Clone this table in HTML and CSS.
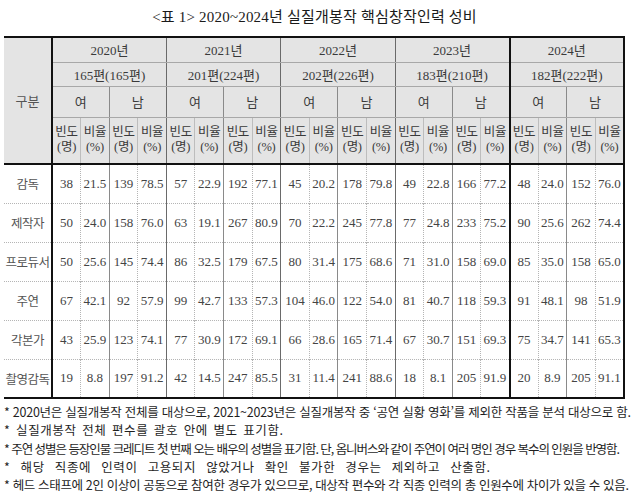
FILE: index.html
```html
<!DOCTYPE html>
<html lang="ko">
<head>
<meta charset="utf-8">
<title>표 1</title>
<link rel="stylesheet" href="styles.css">
</head>
<body>
<div class="page">
  <h1 class="title">&lt;표 1&gt; 2020~2024년 실질개봉작 핵심창작인력 성비</h1>
  <table class="stats">
    <colgroup>
      <col class="c-label">
      <col><col><col><col><col><col><col><col><col><col>
      <col><col><col><col><col><col><col><col><col><col>
    </colgroup>
    <thead>
      <tr class="r-year">
        <th rowspan="4" class="label">구분</th>
        <th colspan="4" class="ys">2020년</th>
        <th colspan="4" class="ys">2021년</th>
        <th colspan="4" class="ys">2022년</th>
        <th colspan="4" class="ys">2023년</th>
        <th colspan="4" class="ys last">2024년</th>
      </tr>
      <tr class="r-count">
        <th colspan="4" class="ys">165편(165편)</th>
        <th colspan="4" class="ys">201편(224편)</th>
        <th colspan="4" class="ys">202편(226편)</th>
        <th colspan="4" class="ys">183편(210편)</th>
        <th colspan="4" class="ys last">182편(222편)</th>
      </tr>
      <tr class="r-sex">
        <th colspan="2" class="ys">여</th><th colspan="2" class="gs">남</th>
        <th colspan="2" class="ys">여</th><th colspan="2" class="gs">남</th>
        <th colspan="2" class="ys">여</th><th colspan="2" class="gs">남</th>
        <th colspan="2" class="ys">여</th><th colspan="2" class="gs">남</th>
        <th colspan="2" class="ys last">여</th><th colspan="2" class="gs">남</th>
      </tr>
      <tr class="r-unit">
        <th class="ys">빈도<br>(명)</th><th class="ss">비율<br>(%)</th><th class="gs">빈도<br>(명)</th><th class="ss">비율<br>(%)</th>
        <th class="ys">빈도<br>(명)</th><th class="ss">비율<br>(%)</th><th class="gs">빈도<br>(명)</th><th class="ss">비율<br>(%)</th>
        <th class="ys">빈도<br>(명)</th><th class="ss">비율<br>(%)</th><th class="gs">빈도<br>(명)</th><th class="ss">비율<br>(%)</th>
        <th class="ys">빈도<br>(명)</th><th class="ss">비율<br>(%)</th><th class="gs">빈도<br>(명)</th><th class="ss">비율<br>(%)</th>
        <th class="ys last">빈도<br>(명)</th><th class="ss">비율<br>(%)</th><th class="gs">빈도<br>(명)</th><th class="ss">비율<br>(%)</th>
      </tr>
    </thead>
    <tbody class="data">
      <tr>
        <th class="row-label">감독</th>
        <td>38</td><td>21.5</td><td>139</td><td>78.5</td>
        <td>57</td><td>22.9</td><td>192</td><td>77.1</td>
        <td>45</td><td>20.2</td><td>178</td><td>79.8</td>
        <td>49</td><td>22.8</td><td>166</td><td>77.2</td>
        <td>48</td><td>24.0</td><td>152</td><td>76.0</td>
      </tr>
      <tr>
        <th class="row-label">제작자</th>
        <td>50</td><td>24.0</td><td>158</td><td>76.0</td>
        <td>63</td><td>19.1</td><td>267</td><td>80.9</td>
        <td>70</td><td>22.2</td><td>245</td><td>77.8</td>
        <td>77</td><td>24.8</td><td>233</td><td>75.2</td>
        <td>90</td><td>25.6</td><td>262</td><td>74.4</td>
      </tr>
      <tr>
        <th class="row-label">프로듀서</th>
        <td>50</td><td>25.6</td><td>145</td><td>74.4</td>
        <td>86</td><td>32.5</td><td>179</td><td>67.5</td>
        <td>80</td><td>31.4</td><td>175</td><td>68.6</td>
        <td>71</td><td>31.0</td><td>158</td><td>69.0</td>
        <td>85</td><td>35.0</td><td>158</td><td>65.0</td>
      </tr>
      <tr>
        <th class="row-label">주연</th>
        <td>67</td><td>42.1</td><td>92</td><td>57.9</td>
        <td>99</td><td>42.7</td><td>133</td><td>57.3</td>
        <td>104</td><td>46.0</td><td>122</td><td>54.0</td>
        <td>81</td><td>40.7</td><td>118</td><td>59.3</td>
        <td>91</td><td>48.1</td><td>98</td><td>51.9</td>
      </tr>
      <tr>
        <th class="row-label">각본가</th>
        <td>43</td><td>25.9</td><td>123</td><td>74.1</td>
        <td>77</td><td>30.9</td><td>172</td><td>69.1</td>
        <td>66</td><td>28.6</td><td>165</td><td>71.4</td>
        <td>67</td><td>30.7</td><td>151</td><td>69.3</td>
        <td>75</td><td>34.7</td><td>141</td><td>65.3</td>
      </tr>
      <tr>
        <th class="row-label">촬영감독</th>
        <td>19</td><td>8.8</td><td>197</td><td>91.2</td>
        <td>42</td><td>14.5</td><td>247</td><td>85.5</td>
        <td>31</td><td>11.4</td><td>241</td><td>88.6</td>
        <td>18</td><td>8.1</td><td>205</td><td>91.9</td>
        <td>20</td><td>8.9</td><td>205</td><td>91.1</td>
      </tr>
    </tbody>
  </table>
  <ul class="notes">
    <li class="n1">* 2020년은 실질개봉작 전체를 대상으로, 2021~2023년은 실질개봉작 중 ‘공연 실황 영화’를 제외한 작품을 분석 대상으로 함.</li>
    <li class="n2">* 실질개봉작 전체 편수를 괄호 안에 별도 표기함.</li>
    <li class="n3">* 주연 성별은 등장인물 크레디트 첫 번째 오는 배우의 성별을 표기함. 단, 옴니버스와 같이 주연이 여러 명인 경우 복수의 인원을 반영함.</li>
    <li class="n4">* 해당 직종에 인력이 고용되지 않았거나 확인 불가한 경우는 제외하고 산출함.</li>
    <li class="n5">* 헤드 스태프에 2인 이상이 공동으로 참여한 경우가 있으므로, 대상작 편수와 각 직종 인력의 총 인원수에 차이가 있을 수 있음.</li>
  </ul>
</div>
</body>
</html>
```

FILE: styles.css
```css
html, body {
  margin: 0;
  padding: 0;
  background: #ffffff;
}

.page {
  width: 621px;
  margin-left: 4px;
  font-family: "Liberation Serif", "Noto Sans CJK KR", serif;
  color: #333333;
}

.title {
  margin: 0;
  height: 36px;
  line-height: 34px;
  font-size: 15px;
  font-weight: normal;
  text-align: center;
  color: #1a1a1a;
  letter-spacing: 0.2px;
}

.stats {
  width: 621px;
  table-layout: fixed;
  border-collapse: collapse;
  border-top: 2px solid #111;
  border-bottom: 2px solid #111;
  border-left: hidden;
  font-size: 13px;
}

.stats .c-label {
  width: 48px;
}

.stats th,
.stats td {
  padding: 0;
  text-align: center;
  vertical-align: middle;
  font-weight: normal;
  white-space: nowrap;
}

.stats thead th {
  background: #e4e4e4;
  color: #3a3a3a;
  border-top: 1px solid #a8a8a8;
  border-bottom: 1px solid #a8a8a8;
}

.stats thead tr:last-child th {
  border-bottom: 2px solid #111;
}

.stats thead th.ys {
  border-left: 1px solid #6a6a6a;
}

.stats thead th.last {
  border-left: 2px solid #111;
}

.stats thead th.gs {
  border-left: 1px solid #8a8a8a;
}

.stats thead th.ss {
  border-left: 1px solid #bdbdbd;
}

.stats th:last-child,
.stats td:last-child {
  border-right: 2px solid #111;
}

.stats thead th.label {
  border-left: hidden;
  border-right: 2px solid #111;
  border-bottom: 2px solid #111;
  font-size: 13px;
  color: #555;
}

.r-year { height: 25px; }
.r-count { height: 24px; }
.r-sex { height: 31px; }
.r-unit { height: 47px; }

.r-year th,
.r-count th {
  font-size: 13px;
}

.r-sex th {
  font-size: 13px;
}

.r-unit th {
  font-size: 12.5px;
  line-height: 15px;
  letter-spacing: -0.3px;
}

.data tr {
  height: 39px;
}

.data td {
  color: #444;
  font-size: 13px;
  border-left: 1px dotted #b5b5b5;
  border-top: 1px dotted #b5b5b5;
}

.data th.row-label {
  font-size: 12.5px;
  color: #555;
  border-left: hidden;
  border-right: 2px solid #111;
  border-top: 1px dotted #b5b5b5;
  letter-spacing: -0.5px;
}

.data tr:first-child td,
.data tr:first-child th {
  border-top: 2px solid #111;
}

.data td:nth-child(4n+2) {
  border-left: 1px solid #6a6a6a;
}

.data td:nth-child(4n+4) {
  border-left: 1px solid #8a8a8a;
}

.data td:nth-child(18) {
  border-left: 2px solid #111;
}

.notes {
  list-style: none;
  margin: 4px 0 0 0;
  padding: 0;
  font-family: "Noto Sans CJK KR", sans-serif;
  font-size: 12.5px;
  line-height: 18.3px;
  color: #1e1e1e;
  white-space: nowrap;
}

.notes li {
  margin: 0;
}

.notes .n1 { letter-spacing: -0.25px; }
.notes .n2 { letter-spacing: 0.6px; word-spacing: 1.5px; }
.notes .n3 { letter-spacing: -1.05px; }
.notes .n4 { letter-spacing: 0.6px; word-spacing: 6px; }
.notes .n5 { letter-spacing: -0.35px; }
```
